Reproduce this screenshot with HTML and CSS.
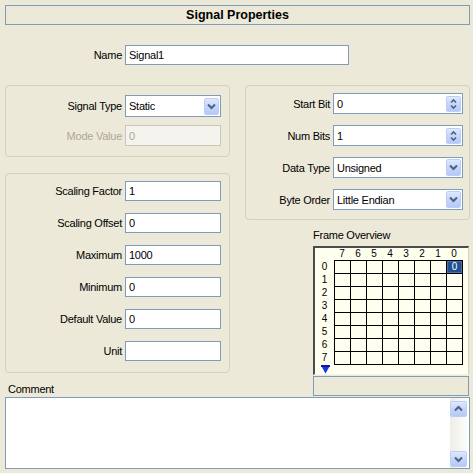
FILE: index.html
```html
<!DOCTYPE html>
<html>
<head>
<meta charset="utf-8">
<link rel="stylesheet" href="styles.css">
</head>
<body>
<div class="page">
  <div class="title">Signal Properties</div>

  <div class="row name-row">
    <span class="lbl">Name</span>
    <div class="input name-input">Signal1</div>
  </div>

  <div class="columns">
    <div class="col left">
      <div class="panel p1">
        <div class="row">
          <span class="lbl">Signal Type</span>
          <div class="input combo h22"><span>Static</span>
            <span class="btn"><svg width="13" height="15" viewBox="0 0 13 15"><path d="M3 5.5 L6.5 9 L10 5.5" fill="none" stroke="#4d6185" stroke-width="2"/></svg></span>
          </div>
        </div>
        <div class="row">
          <span class="lbl dis">Mode Value</span>
          <div class="input disabled h21">0</div>
        </div>
      </div>

      <div class="panel p2">
        <div class="row"><span class="lbl">Scaling Factor</span><div class="input">1</div></div>
        <div class="row"><span class="lbl">Scaling Offset</span><div class="input">0</div></div>
        <div class="row"><span class="lbl">Maximum</span><div class="input">1000</div></div>
        <div class="row"><span class="lbl">Minimum</span><div class="input">0</div></div>
        <div class="row"><span class="lbl">Default Value</span><div class="input">0</div></div>
        <div class="row"><span class="lbl">Unit</span><div class="input"></div></div>
      </div>
    </div>

    <div class="col right">
      <div class="panel p3">
        <div class="row">
          <span class="lbl">Start Bit</span>
          <div class="input combo h21"><span>0</span>
            <span class="btn spin"><svg width="13" height="14" viewBox="0 0 13 14"><path d="M4 5.5 L6.5 3 L9 5.5" fill="none" stroke="#4d6185" stroke-width="1.6"/><path d="M4 8.5 L6.5 11 L9 8.5" fill="none" stroke="#4d6185" stroke-width="1.6"/></svg></span>
          </div>
        </div>
        <div class="row">
          <span class="lbl">Num Bits</span>
          <div class="input combo h21"><span>1</span>
            <span class="btn spin"><svg width="13" height="14" viewBox="0 0 13 14"><path d="M4 5.5 L6.5 3 L9 5.5" fill="none" stroke="#4d6185" stroke-width="1.6"/><path d="M4 8.5 L6.5 11 L9 8.5" fill="none" stroke="#4d6185" stroke-width="1.6"/></svg></span>
          </div>
        </div>
        <div class="row">
          <span class="lbl">Data Type</span>
          <div class="input combo h21"><span>Unsigned</span>
            <span class="btn"><svg width="13" height="15" viewBox="0 0 13 15"><path d="M3 5.5 L6.5 9 L10 5.5" fill="none" stroke="#4d6185" stroke-width="2"/></svg></span>
          </div>
        </div>
        <div class="row">
          <span class="lbl">Byte Order</span>
          <div class="input combo h21"><span>Little Endian</span>
            <span class="btn"><svg width="13" height="15" viewBox="0 0 13 15"><path d="M3 5.5 L6.5 9 L10 5.5" fill="none" stroke="#4d6185" stroke-width="2"/></svg></span>
          </div>
        </div>
      </div>

      <div class="fo">
        <div class="fo-label">Frame Overview</div>
        <div class="fo-box">
          <div class="colhdr"><span>7</span><span>6</span><span>5</span><span>4</span><span>3</span><span>2</span><span>1</span><span>0</span></div>
          <div class="rowhdr"><span>0</span><span>1</span><span>2</span><span>3</span><span>4</span><span>5</span><span>6</span><span>7</span></div>
          <div class="cells">
            <span></span><span></span><span></span><span></span><span></span><span></span><span></span><span class="on">0</span>
            <span></span><span></span><span></span><span></span><span></span><span></span><span></span><span></span>
            <span></span><span></span><span></span><span></span><span></span><span></span><span></span><span></span>
            <span></span><span></span><span></span><span></span><span></span><span></span><span></span><span></span>
            <span></span><span></span><span></span><span></span><span></span><span></span><span></span><span></span>
            <span></span><span></span><span></span><span></span><span></span><span></span><span></span><span></span>
            <span></span><span></span><span></span><span></span><span></span><span></span><span></span><span></span>
            <span></span><span></span><span></span><span></span><span></span><span></span><span></span><span></span>
          </div>
          <div class="tri"><svg width="9" height="9" viewBox="0 0 9 9"><polygon points="0,0.5 9,0.5 4.5,8.5" fill="#1434f0"/><rect x="0" y="0" width="9" height="2" fill="#0a1e9a"/></svg></div>
        </div>
      </div>
    </div>
  </div>

  <div class="comment-row">
    <span class="comment-lbl">Comment</span>
    <div class="status"></div>
  </div>

  <div class="textarea">
    <div class="scroll">
      <span class="sbtn"><svg width="15" height="14" viewBox="0 0 15 14"><path d="M4 8.5 L7.5 5 L11 8.5" fill="none" stroke="#4d6185" stroke-width="2"/></svg></span>
      <span class="sbtn"><svg width="15" height="14" viewBox="0 0 15 14"><path d="M4 5.5 L7.5 9 L11 5.5" fill="none" stroke="#4d6185" stroke-width="2"/></svg></span>
    </div>
  </div>
</div>
</body>
</html>
```

FILE: styles.css
```css
body {
  margin: 0;
  background: #ece9d8;
  font-family: "Liberation Sans", Arial, sans-serif;
  font-size: 11px;
  letter-spacing: -0.25px;
  color: #000;
}

.page {
  width: 465px;
  padding: 5px 3px 0 5px;
}

.title {
  height: 20px;
  box-sizing: border-box;
  border: 1px solid #7f9db9;
  display: flex;
  align-items: center;
  justify-content: center;
  font-weight: bold;
  font-size: 12.5px;
  letter-spacing: 0;
}

.row {
  display: flex;
  align-items: center;
}

.lbl {
  flex: none;
  text-align: right;
  margin-right: 3px;
  white-space: nowrap;
}

.lbl.dis {
  color: #aca899;
}

.input {
  box-sizing: border-box;
  height: 20px;
  border: 1px solid #7f9db9;
  background: #fff;
  padding-left: 3px;
  display: flex;
  align-items: center;
  white-space: nowrap;
}

.input.h21 { height: 21px; }
.input.h22 { height: 22px; }

.input.disabled {
  background: #f4f3ee;
  border-color: #c9c7ba;
  color: #aca899;
}

.name-row {
  margin-top: 20px;
}

.name-row .lbl { width: 117px; }
.name-input { width: 224px; }

.columns {
  display: flex;
  gap: 15px;
  margin-top: 20px;
  align-items: flex-start;
}

.col {
  width: 225px;
  display: flex;
  flex-direction: column;
}

.panel {
  box-sizing: border-box;
  border: 1px solid #d3d0bf;
  border-radius: 4px;
  display: flex;
  flex-direction: column;
}

.p1 {
  height: 72px;
  padding-top: 9px;
  gap: 8px;
}

.p2 {
  height: 200px;
  margin-top: 16px;
  padding-top: 7px;
  gap: 12px;
}

.p3 {
  height: 135px;
  padding-top: 7px;
  gap: 11px;
}

.left .lbl { width: 116px; }
.left .input { width: 96px; }
.p3 .lbl { width: 84px; }
.p3 .input { width: 130px; }

.combo {
  justify-content: space-between;
  padding-right: 1px;
}

.btn {
  width: 15px;
  height: 17px;
  box-sizing: border-box;
  border: 1px solid #bccdf8;
  border-radius: 2px;
  background: linear-gradient(180deg, #dfe8fe 0%, #c8d7fb 45%, #b6c9f6 100%);
  display: flex;
  align-items: center;
  justify-content: center;
}

.btn.spin {
  height: 16px;
}

.fo {
  width: 156px;
  align-self: flex-end;
  margin-right: 1px;
  margin-top: 8px;
}

.fo-label {
  height: 15px;
  line-height: 15px;
  margin-bottom: 3px;
}

.fo-box {
  width: 153px;
  height: 126px;
  border-top: 2px solid #4b4b4b;
  border-left: 2px solid #4b4b4b;
  border-right: 1px solid #d4d0c8;
  border-bottom: 1px solid #f4f3ee;
  background: #fffff0;
  display: grid;
  grid-template-columns: 19px 129px;
  grid-template-rows: 12px 105px 9px;
  font-size: 10px;
  letter-spacing: 0;
}

.colhdr {
  grid-column: 2;
  grid-row: 1;
  display: grid;
  grid-template-columns: repeat(8, 16px);
  line-height: 12px;
  text-align: center;
}

.rowhdr {
  grid-column: 1;
  grid-row: 2;
  display: grid;
  grid-template-rows: repeat(8, 13px);
  text-align: center;
  line-height: 14px;
}

.cells {
  grid-column: 2;
  grid-row: 2;
  border-left: 1px solid #000;
  border-top: 1px solid #000;
  display: grid;
  grid-template-columns: repeat(8, 16px);
  grid-template-rows: repeat(8, 13px);
}

.cells span {
  box-sizing: border-box;
  border-right: 1px solid #000;
  border-bottom: 1px solid #000;
}

.cells span.on {
  background: #21508f;
  box-shadow: inset 0 0 0 1px #4b72ad;
  color: #fff;
  text-align: center;
  line-height: 12px;
}

.tri {
  grid-column: 1;
  grid-row: 3;
  display: flex;
  justify-content: center;
  align-items: flex-start;
  padding-left: 1px;
}

.tri svg { display: block; }

.comment-row {
  display: flex;
  justify-content: space-between;
  align-items: flex-end;
  margin-top: 1px;
}

.comment-lbl {
  padding-left: 3px;
  line-height: 13px;
}

.status {
  width: 156px;
  height: 20px;
  box-sizing: border-box;
  border: 1px solid #7f9db9;
  margin-right: 1px;
}

.textarea {
  margin-top: 1px;
  height: 72px;
  box-sizing: border-box;
  border: 1px solid #7f9db9;
  background: #fff;
  display: flex;
  justify-content: flex-end;
}

.scroll {
  width: 17px;
  margin-right: 2px;
  padding: 3px 0 1px;
  box-sizing: border-box;
  display: flex;
  flex-direction: column;
  justify-content: space-between;
  background: linear-gradient(90deg, #eeede6, #fcfcfa);
}

.sbtn {
  height: 16px;
  box-sizing: border-box;
  border: 1px solid #bccdf8;
  border-radius: 2px;
  background: linear-gradient(180deg, #dfe8fe 0%, #c8d7fb 45%, #b6c9f6 100%);
  display: flex;
  align-items: center;
  justify-content: center;
}
```
